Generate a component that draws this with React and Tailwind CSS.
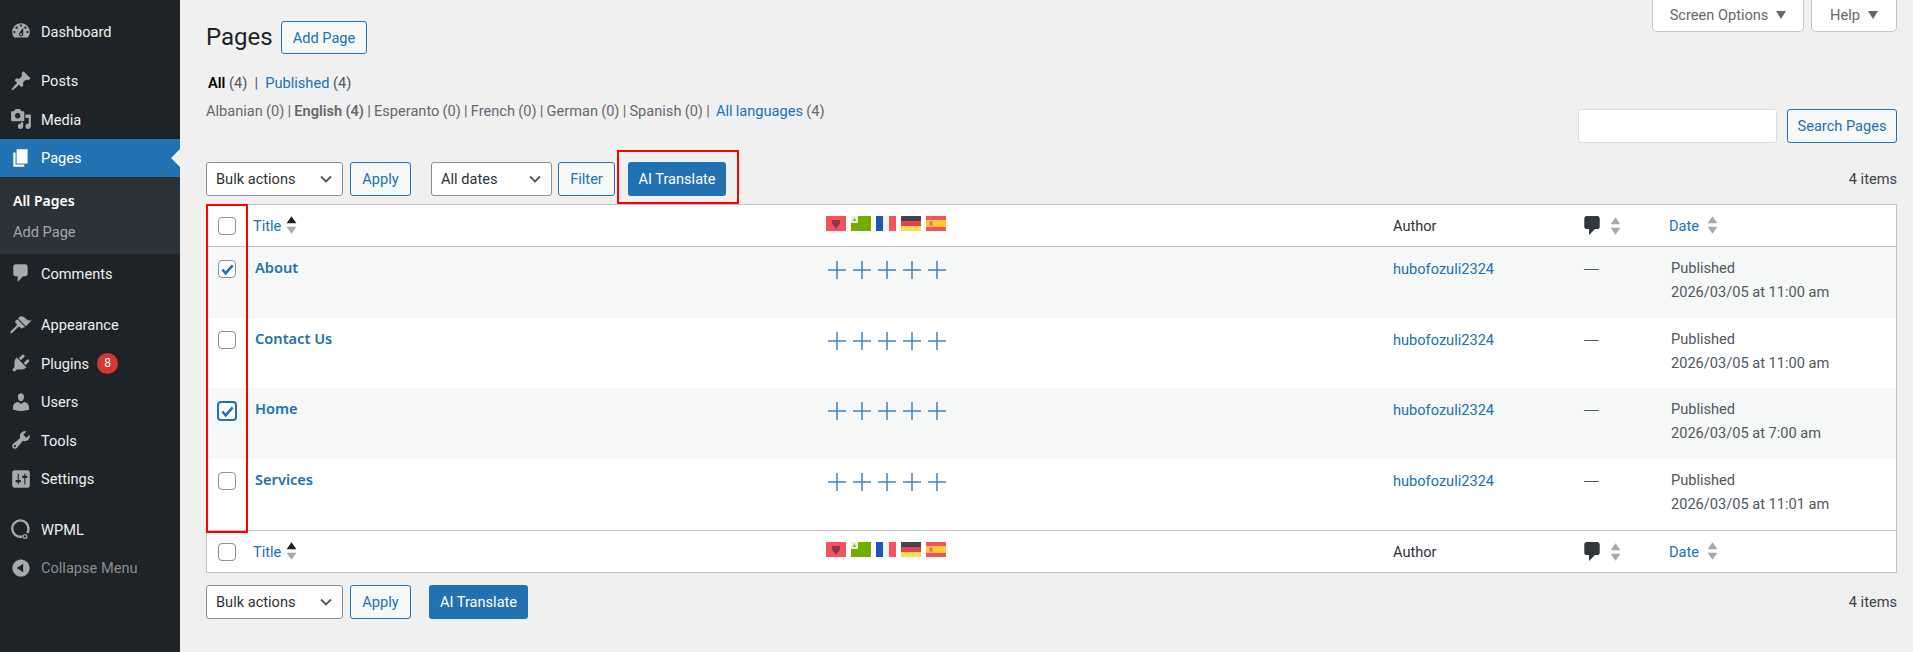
const FONT = "font-['Roboto',sans-serif]";
const BOLD = "font-['Noto_Sans',sans-serif] font-semibold";

const icons = {
  dashboard:
    "M3.76 16h12.48c1.1-1.37 1.76-3.11 1.76-5 0-4.42-3.58-8-8-8s-8 3.58-8 8c0 1.89.66 3.63 1.76 5zM10 4c.55 0 1 .45 1 1s-.45 1-1 1-1-.45-1-1 .45-1 1-1zM6 6c.55 0 1 .45 1 1s-.45 1-1 1-1-.45-1-1 .45-1 1-1zm8 0c.55 0 1 .45 1 1s-.45 1-1 1-1-.45-1-1 .45-1 1-1zm-5.37 5.55L12 7v6c0 1.1-.9 2-2 2s-2-.9-2-2c0-.57.24-1.08.63-1.45zM4 10c.55 0 1 .45 1 1s-.45 1-1 1-1-.45-1-1 .45-1 1-1zm12 0c.55 0 1 .45 1 1s-.45 1-1 1-1-.45-1-1 .45-1 1-1zm-5 3c0-.55-.45-1-1-1s-1 .45-1 1 .45 1 1 1 1-.45 1-1z",
  posts:
    "M10.44 3.02l1.82-1.82 6.36 6.35-1.83 1.82c-1.05-.68-2.48-.57-3.41.36l-.75.75c-.92.93-1.04 2.35-.35 3.41l-1.83 1.82-2.41-2.41-2.8 2.79c-.42.42-3.38 2.71-3.8 2.29s1.86-3.39 2.28-3.81l2.79-2.79L4.1 9.36l1.83-1.82c1.05.69 2.48.57 3.4-.36l.75-.75c.93-.92 1.05-2.35.36-3.41z",
  media:
    "M13 11V4c0-.55-.45-1-1-1h-1.67L9 1H5L3.67 3H2c-.55 0-1 .45-1 1v7c0 .55.45 1 1 1h10c.55 0 1-.45 1-1zM7 4.500c1.38 0 2.500 1.120 2.500 2.500S8.380 9.500 7 9.500 4.500 8.380 4.500 7 5.620 4.500 7 4.500zM14 6h5v10.500c0 1.380-1.120 2.500-2.500 2.500S14 17.880 14 16.500s1.120-2.500 2.500-2.500c.17 0 .34.020.5.050V9h-3V6zm-4 8.050V13h2v3.500c0 1.380-1.120 2.500-2.500 2.500S7 17.880 7 16.500 8.120 14 9.500 14c.17 0 .34.020.5.050z",
  pages: "M6 15V2h10v13H6zm-1 1h8v2H3V5h2v11z",
  comments:
    "M5 2h9c1.1 0 2 .9 2 2v7c0 1.1-.9 2-2 2h-2l-5 5v-5H5c-1.1 0-2-.9-2-2V4c0-1.1.9-2 2-2z",
  appearance:
    "M14.48 11.06L7.41 3.99l1.5-1.5c.5-.56 2.3-.47 3.51.32 1.21.8 1.43 1.28 2.91 2.1 1.18.64 2.45 1.26 4.45.85zm-.71.71L6.7 4.7 4.93 6.47c-.39.39-.39 1.02 0 1.41l1.06 1.06c.39.39.39 1.03 0 1.42-.6.6-5.4 5.41-5.4 5.41-.39.39-.39 1.02 0 1.41.39.39 1.02.39 1.41 0 0 0 4.81-4.8 5.41-5.4.39-.39 1.03-.39 1.42 0l1.06 1.06c.39.39 1.02.39 1.41 0z",
  plugins:
    "M13.11 4.36L9.87 7.6 8 5.73l3.24-3.24c.35-.34 1.05-.2 1.56.32.52.51.66 1.21.31 1.55zm-8 1.77l.91-1.12 9.01 9.01-1.19.84c-.71.71-2.63 1.16-3.82 1.16H6.14L4.9 17.26c-.59.59-1.54.59-2.12 0-.59-.58-.59-1.53 0-2.12l1.24-1.24v-3.88c0-1.13.4-3.19 1.09-3.89zm7.26 3.97l3.24-3.24c.34-.35 1.04-.21 1.55.31.52.51.66 1.21.31 1.55l-3.24 3.25z",
  users:
    "M10 9.25c-2.27 0-2.73-3.44-2.73-3.44C7 4.02 7.82 2 9.97 2c2.16 0 2.98 2.02 2.71 3.81 0 0-.41 3.44-2.68 3.44zm0 2.57L12.72 10c2.39 0 4.52 2.33 4.52 4.53v2.49s-3.65 1.13-7.24 1.13c-3.65 0-7.24-1.13-7.24-1.13v-2.49c0-2.25 1.94-4.48 4.47-4.48z",
  tools:
    "M16.68 9.77c-1.34 1.34-3.3 1.67-4.95.99l-5.41 6.52c-.99.99-2.59.99-3.58 0s-.99-2.59 0-3.57l6.52-5.42c-.68-1.65-.35-3.61.99-4.95 1.28-1.28 3.12-1.62 4.72-1.06l-2.89 2.89 2.82 2.82 2.86-2.87c.53 1.58.18 3.39-1.08 4.65zM3.81 16.21c.4.39 1.04.39 1.43 0 .4-.4.4-1.04 0-1.43-.39-.4-1.03-.4-1.43 0-.39.39-.39 1.03 0 1.43z",
  settings:
    "M18 16V4c0-1.1-.9-2-2-2H4c-1.1 0-2 .9-2 2v12c0 1.1.9 2 2 2h12c1.1 0 2-.9 2-2zM8 11h1c.55 0 1 .45 1 1s-.45 1-1 1H8v1.5c0 .28-.22.5-.5.5s-.5-.22-.5-.5V13H6c-.55 0-1-.45-1-1s.45-1 1-1h1V5.5c0-.28.22-.5.5-.5s.5.22.5.5V11zm5-2h-1c-.55 0-1-.45-1-1s.45-1 1-1h1V5.5c0-.28.22-.5.5-.5s.5.22.5.5V7h1c.55 0 1 .45 1 1s-.45 1-1 1h-1v5.5c0 .28-.22.5-.5.5s-.5-.22-.5-.5V9z",
  collapse:
    "M10 2.16c4.33 0 7.84 3.51 7.84 7.84s-3.51 7.84-7.84 7.84S2.16 14.33 2.16 10 5.71 2.16 10 2.16zm2 11.72V6.12L6.18 9.97z",
};

function MenuIcon({ name, className = "text-[#a7aaad]" }) {
  return (
    <svg viewBox="0 0 20 20" className={`w-[22px] h-[22px] shrink-0 fill-current ${className}`}>
      <path d={icons[name]} fillRule="evenodd" />
    </svg>
  );
}

function WpmlIcon() {
  return (
    <svg viewBox="0 0 20 20" className="w-[22px] h-[22px] shrink-0 text-[#a7aaad]" fill="none" stroke="currentColor">
      <path d="M11 16.800A7.400 7.400 0 1 1 16.800 10c0 1.400-.4 2.700-1.200 3.700" strokeWidth="2.200" />
      <circle cx="13.600" cy="16.800" r="1.700" strokeWidth="1.200" />
    </svg>
  );
}

function MenuItem({ icon, label, badge, mt = "" }) {
  return (
    <div className={`h-[38.5px] flex items-center pl-[10px] text-[14.6px] text-[#f0f0f1] ${mt}`}>
      {icon === "wpml" ? <WpmlIcon /> : <MenuIcon name={icon} />}
      <span className="ml-[9px] pt-[3px]">{label}</span>
      {badge && (
        <span className="ml-[8px] w-[21px] h-[21px] rounded-full bg-[#d63638] text-white text-[12px] flex items-center justify-center">
          {badge}
        </span>
      )}
    </div>
  );
}

function Sidebar() {
  return (
    <aside className="w-[180px] shrink-0 bg-[#1d2327] pt-[12px] min-h-[652px]">
      <MenuItem icon="dashboard" label="Dashboard" />
      <MenuItem icon="posts" label="Posts" mt="mt-[11px]" />
      <MenuItem icon="media" label="Media" />
      <div className="relative h-[38.5px] flex items-center pl-[10px] bg-[#2271b1] text-white text-[14.6px]">
        <MenuIcon name="pages" className="text-white" />
        <span className="ml-[9px] pt-[3px]">Pages</span>
        <span className="absolute right-0 top-[10px] border-y-[9px] border-y-transparent border-r-[9px] border-r-[#f0f0f1]" />
      </div>
      <div className="h-[77px] bg-[#2c3338] pt-[8px] pl-[13px] text-[14.6px]">
        <div className={`h-[31px] flex items-center text-[14px] text-white ${BOLD}`}>All Pages</div>
        <div className="h-[31px] flex items-center pt-[3px] text-[#c3c4c7]/80">Add Page</div>
      </div>
      <MenuItem icon="comments" label="Comments" />
      <MenuItem icon="appearance" label="Appearance" mt="mt-[13px]" />
      <MenuItem icon="plugins" label="Plugins" badge="8" />
      <MenuItem icon="users" label="Users" />
      <MenuItem icon="tools" label="Tools" />
      <MenuItem icon="settings" label="Settings" />
      <MenuItem icon="wpml" label="WPML" mt="mt-[12px]" />
      <div className="h-[38.5px] flex items-center pl-[10px] text-[14.6px] text-[#a7aaad]/80">
        <MenuIcon name="collapse" />
        <span className="ml-[9px] pt-[3px]">Collapse Menu</span>
      </div>
    </aside>
  );
}

function SelectBox({ label, width }) {
  return (
    <div className={`${width} h-[34px] bg-white border border-[#8c8f94] rounded-[3px] pl-[9px] pr-[8px] flex items-center justify-between text-[14.6px] text-[#2c3338]`}>
      <span className="pt-[2px]">{label}</span>
      <svg viewBox="0 0 16 16" className="w-[16px] h-[16px]" fill="none" stroke="#50575e" strokeWidth="1.8">
        <path d="M3 5.500l5 5 5-5" />
      </svg>
    </div>
  );
}

function OutlineButton({ label, width }) {
  return (
    <div className={`${width} h-[34px] pt-[2px] bg-[#f6f7f7] border border-[#2271b1] rounded-[3px] flex items-center justify-center text-[14.6px] text-[#2271b1]`}>
      {label}
    </div>
  );
}

function PrimaryButton({ width }) {
  return (
    <div className={`${width} h-[34px] pt-[2px] bg-[#2271b1] rounded-[3px] flex items-center justify-center text-[14.6px] text-white`}>
      AI Translate
    </div>
  );
}

function SortArrows({ active }) {
  return (
    <svg viewBox="0 0 10 18" className="w-[11px] h-[20px] shrink-0">
      <path d="M5 1l4.500 6.500h-9z" fill={active ? "#1d2327" : "#a7aaad"} />
      <path d="M5 17L.5 10.500h9z" fill="#a7aaad" />
    </svg>
  );
}

function CheckMark() {
  return (
    <svg viewBox="0 0 16 16" className="w-[15px] h-[15px]" fill="none" stroke="#2271b1" strokeWidth="2.800">
      <path d="M2.500 8l3.500 4L13.500 3.500" />
    </svg>
  );
}

function Checkbox({ checked, focus }) {
  if (focus) {
    return (
      <span className="w-[20px] h-[20px] -mx-px rounded-[4px] border-2 border-[#2271b1] bg-white flex items-center justify-center">
        <CheckMark />
      </span>
    );
  }
  return (
    <span className="w-[18px] h-[18px] rounded-[4px] border border-[#8c8f94] bg-white flex items-center justify-center">
      {checked && <CheckMark />}
    </span>
  );
}

function Flags() {
  return (
    <div className="flex gap-[5px]">
      <svg viewBox="0 0 20 15" className="w-[20px] h-[15px]">
        <rect width="20" height="15" fill="#f5525f" />
        <path d="M6 4h8v4l-2 2-2 3-2-3-2-2z" fill="#8a3a44" />
      </svg>
      <svg viewBox="0 0 20 15" className="w-[20px] h-[15px]">
        <rect width="20" height="15" fill="#74ac00" />
        <rect width="7" height="7" fill="#e8eee0" />
        <path d="M3.500 1.500l1.500 3.500h-3z" fill="#74ac00" />
      </svg>
      <svg viewBox="0 0 20 15" className="w-[20px] h-[15px]">
        <rect width="7" height="15" fill="#1f55b5" />
        <rect x="7" width="6" height="15" fill="#f1f2f4" />
        <rect x="13" width="7" height="15" fill="#f9515e" />
      </svg>
      <svg viewBox="0 0 20 15" className="w-[20px] h-[15px]">
        <rect width="20" height="5" fill="#43464e" />
        <rect y="5" width="20" height="5" fill="#e8404a" />
        <rect y="10" width="20" height="5" fill="#fddc55" />
      </svg>
      <svg viewBox="0 0 20 15" className="w-[20px] h-[15px]">
        <rect width="20" height="15" fill="#f5525f" />
        <rect y="4" width="20" height="7" fill="#fcc934" />
        <rect x="3.500" y="5.500" width="3" height="4" fill="#e8697a" />
      </svg>
    </div>
  );
}

function Pluses() {
  return (
    <div className="flex gap-[7px] pl-[2px]">
      {[0, 1, 2, 3, 4].map((i) => (
        <svg key={i} viewBox="0 0 18 18" className="w-[18px] h-[18px]" stroke="#2271b1" strokeWidth="1.500" opacity="0.85">
          <path d="M0 9h18M9 0v18" />
        </svg>
      ))}
    </div>
  );
}

const gridCols = "grid grid-cols-[37px_573px_567px_191px_85px_1fr]";

function HeadRow({ borderClass }) {
  return (
    <div className={`${gridCols} h-[42px] items-center text-[14.6px] ${borderClass}`}>
      <div className="pl-[11px] flex">
        <Checkbox />
      </div>
      <div className="pl-[9px] flex items-center gap-[5px] text-[#2271b1]">
        <span className="pt-[2px]">Title</span> <SortArrows active />
      </div>
      <div className="pl-[9px] -mt-[5px]">
        <Flags />
      </div>
      <div className="pl-[9px] pt-[2px] text-[#2c3338]">Author</div>
      <div className="pl-[9px] flex items-center gap-[10px]">
        <svg viewBox="3 2 13 16" className="w-[16px] h-[19px] fill-[#32373c]">
          <path d={icons.comments} />
        </svg>
        <SortArrows />
      </div>
      <div className="pl-[9px] flex items-center gap-[8px] text-[#2271b1]">
        <span className="pt-[2px]">Date</span> <SortArrows />
      </div>
    </div>
  );
}

const rows = [
  { title: "About", date: "2026/03/05 at 11:00 am", checked: true, alt: true, h: "h-[71px]" },
  { title: "Contact Us", date: "2026/03/05 at 11:00 am", h: "h-[70px]" },
  { title: "Home", date: "2026/03/05 at 7:00 am", focus: true, alt: true, h: "h-[71px]" },
  { title: "Services", date: "2026/03/05 at 11:01 am", h: "h-[71px]" },
];

function PageRow({ row }) {
  return (
    <div className={`${gridCols} ${row.h} text-[14.6px] text-[#50575e] ${row.alt ? "bg-[#f6f7f7]" : "bg-white"}`}>
      <div className="pl-[11px] pt-[13px]">
        <Checkbox checked={row.checked} focus={row.focus} />
      </div>
      <div className={`pl-[11px] pt-[10px] text-[#2271b1] ${BOLD}`}>{row.title}</div>
      <div className="pl-[9px] pt-[14px]">
        <Pluses />
      </div>
      <div className="pl-[9px] pt-[12px] text-[#2271b1]">hubofozuli2324</div>
      <div className="pl-[9px] pt-[11px] font-['Liberation_Sans',sans-serif]">—</div>
      <div className="pl-[11px] pt-[9px] leading-[24px]">
        Published
        <br />
        {row.date}
      </div>
    </div>
  );
}

function Tab({ label, width }) {
  return (
    <div className={`${width} h-[32px] bg-white border border-t-0 border-[#c3c4c7] rounded-b-[5px] flex items-center justify-center gap-[8px] text-[14.6px] text-[#646970]`}>
      {label}
      <svg viewBox="0 0 10 8" className="w-[10px] h-[8px] fill-[#646970] -mt-[2px]">
        <path d="M0 0h10L5 8z" />
      </svg>
    </div>
  );
}

export default function App() {
  return (
    <div className={`flex min-h-[652px] bg-[#f0f0f1] ${FONT}`}>
      <Sidebar />
      <main className="relative flex-1 pl-[26px] pr-[16px]">
        <div className="flex justify-between h-[162px]">
          <div className="pt-[21px]">
            <div className="flex items-center gap-[11px]">
              <h1 className="w-[64px] text-[24px] leading-[33px] text-[#1d2327]">Pages</h1>
              <div className="w-[86px] h-[33px] pt-[2px] bg-[#f6f7f7] border border-[#2271b1] rounded-[3px] flex items-center justify-center text-[14.6px] text-[#2271b1]">
                Add Page
              </div>
            </div>
            <div className="mt-[18px] text-[14.6px] leading-[22px] text-[#50575e] pl-[2px]">
              <span className="font-semibold text-black">All</span> (4)&nbsp; | &nbsp;<span className="text-[#2271b1]">Published</span> (4)
            </div>
            <div className="mt-[6px] text-[14.6px] leading-[22px] text-[#646970] [word-spacing:-0.4px]">
              Albanian (0) | <span className="font-semibold">English (4)</span> | Esperanto (0) | French (0) | German (0) | Spanish (0) |{" "}
              <span className="text-[#2271b1] ml-[3px]">All languages</span> (4)
            </div>
          </div>
          <div className="flex flex-col items-end">
            <div className="flex gap-[7px]">
              <Tab label="Screen Options" width="w-[152px]" />
              <Tab label="Help" width="w-[86px]" />
            </div>
            <div className="mt-[77px] flex items-center gap-[10px]">
              <div className="w-[199px] h-[34px] bg-white border border-[#dcdcde] rounded-[3px]" />
              <OutlineButton label="Search Pages" width="w-[110px]" />
            </div>
          </div>
        </div>

        <div className="flex items-center h-[34px]">
          <SelectBox label="Bulk actions" width="w-[137px]" />
          <div className="ml-[7px]"><OutlineButton label="Apply" width="w-[61px]" /></div>
          <div className="ml-[20px]"><SelectBox label="All dates" width="w-[121px]" /></div>
          <div className="ml-[6px]"><OutlineButton label="Filter" width="w-[57px]" /></div>
          <div className="ml-[13px]"><PrimaryButton width="w-[98px]" /></div>
          <span className="ml-auto pt-[2px] text-[14.6px] text-[#3c434a]">4 items</span>
        </div>

        <div className="mt-[8px] bg-white border border-[#c3c4c7]">
          <HeadRow borderClass="border-b border-[#c3c4c7]" />
          {rows.map((row) => (
            <PageRow key={row.title} row={row} />
          ))}
          <HeadRow borderClass="border-t border-[#c3c4c7]" />
        </div>

        <div className="mt-[12px] flex items-center h-[34px]">
          <SelectBox label="Bulk actions" width="w-[137px]" />
          <div className="ml-[7px]"><OutlineButton label="Apply" width="w-[61px]" /></div>
          <div className="ml-[18px]"><PrimaryButton width="w-[99px]" /></div>
          <span className="ml-auto pt-[2px] text-[14.6px] text-[#3c434a]">4 items</span>
        </div>

        {/* red annotation boxes from the screenshot */}
        <div className="absolute left-[437px] top-[150px] w-[122px] h-[54px] border-2 border-[#f00]" />
        <div className="absolute left-[26px] top-[204px] w-[42px] h-[329px] border-2 border-[#f00]" />
      </main>
    </div>
  );
}
